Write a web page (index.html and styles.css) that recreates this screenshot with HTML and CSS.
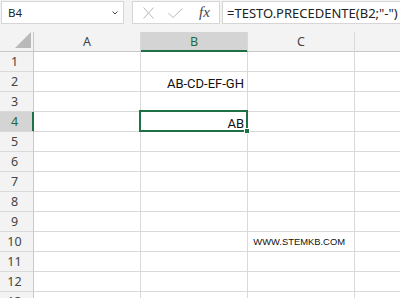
FILE: index.html
```html
<!DOCTYPE html>
<html lang="it">

<head>
  <meta charset="UTF-8">
  <meta name="viewport" content="width=device-width, initial-scale=1.0">
  <title>Foglio1</title>
  <link rel="stylesheet" href="styles.css">
</head>

<body>
  <div class="toolbar">
    <div class="name-box">
      <span>B4</span>
      <svg class="chevron" width="6" height="4" viewBox="0 0 6 4"><path d="M0.5 0.5 L3 3 L5.5 0.5" fill="none" stroke="#444" stroke-width="1"/></svg>
    </div>
    <div class="fx-buttons">
      <svg width="11" height="12" viewBox="0 0 11 12"><path d="M0.5 0.5 L10.5 11.5 M10.5 0.5 L0.5 11.5" stroke="#b8b8b8" stroke-width="1" fill="none"/></svg>
      <svg width="15" height="10" viewBox="0 0 15 10"><path d="M0.5 5 L5 9.5 L14.5 0.5" stroke="#b8b8b8" stroke-width="1" fill="none"/></svg>
      <span class="fx">fx</span>
    </div>
    <div class="formula">=TESTO.PRECEDENTE(B2;"-")</div>
  </div>

  <div class="sheet">
    <div class="hd corner"><svg width="16" height="16" viewBox="0 0 16 16"><path d="M16 0 L16 16 L0 16 Z" fill="#b9b9b9"/></svg></div>
    <div class="hd col">A</div>
    <div class="hd col active">B</div>
    <div class="hd col">C</div>
    <div class="hd col last"></div>

    <div class="hd row">1</div><div class="cell"></div><div class="cell"></div><div class="cell"></div><div class="cell last"></div>
    <div class="hd row">2</div><div class="cell"></div><div class="cell num">AB-CD-EF-GH</div><div class="cell"></div><div class="cell last"></div>
    <div class="hd row">3</div><div class="cell"></div><div class="cell"></div><div class="cell"></div><div class="cell last"></div>
    <div class="hd row active">4</div><div class="cell"></div><div class="cell num selected">AB</div><div class="cell"></div><div class="cell last"></div>
    <div class="hd row">5</div><div class="cell"></div><div class="cell"></div><div class="cell"></div><div class="cell last"></div>
    <div class="hd row">6</div><div class="cell"></div><div class="cell"></div><div class="cell"></div><div class="cell last"></div>
    <div class="hd row">7</div><div class="cell"></div><div class="cell"></div><div class="cell"></div><div class="cell last"></div>
    <div class="hd row">8</div><div class="cell"></div><div class="cell"></div><div class="cell"></div><div class="cell last"></div>
    <div class="hd row">9</div><div class="cell"></div><div class="cell"></div><div class="cell"></div><div class="cell last"></div>
    <div class="hd row">10</div><div class="cell"></div><div class="cell"></div><div class="cell note">WWW.STEMKB.COM</div><div class="cell last"></div>
    <div class="hd row">11</div><div class="cell"></div><div class="cell"></div><div class="cell"></div><div class="cell last"></div>
    <div class="hd row">12</div><div class="cell"></div><div class="cell"></div><div class="cell"></div><div class="cell last"></div>
    <div class="hd row">13</div><div class="cell"></div><div class="cell"></div><div class="cell"></div><div class="cell last"></div>
  </div>
</body>

</html>
```

FILE: styles.css
```css
html,
body {
  margin: 0;
  background: #fff;
  overflow: hidden;
}

body {
  width: 400px;
  height: 298px;
  font-family: "Noto Sans", sans-serif;
  color: #222;
}

.toolbar {
  display: flex;
  align-items: flex-start;
  height: 32px;
  padding: 1px 0 0 1px;
  box-sizing: border-box;
  background: #f3f3f3;
}

.name-box,
.fx-buttons,
.formula {
  height: 23px;
  box-sizing: border-box;
  background: #fff;
  border: 1px solid #d6d6d6;
  display: flex;
  align-items: center;
}

.name-box {
  width: 123px;
  padding: 0 5px 0 6px;
  justify-content: space-between;
  font-size: 11.5px;
}

.fx-buttons {
  width: 88px;
  margin-left: 8px;
  padding-left: 10px;
  gap: 14px;
}

.fx {
  font-family: "Liberation Serif", serif;
  font-style: italic;
  font-size: 15px;
  color: #444;
  margin-left: 2px;
}

.formula {
  flex: 1;
  margin-left: 2px;
  padding-left: 4px;
  border-right: none;
  font-size: 13px;
  white-space: nowrap;
  overflow: hidden;
}

.sheet {
  display: grid;
  grid-template-columns: 34px 107px 107px 107px 1fr;
  grid-auto-rows: 20px;
}

.sheet > div {
  box-sizing: border-box;
  border-right: 1px solid #d9d9d9;
  border-bottom: 1px solid #d9d9d9;
}

.hd {
  background: #f3f3f3;
  color: #444;
  font-size: 12.5px;
  display: flex;
  align-items: center;
  justify-content: center;
}

.sheet > .corner {
  justify-content: flex-end;
  align-items: flex-end;
  padding: 0 2px 3px 0;
  border-right-color: #c8c8c8;
  border-bottom-color: #c8c8c8;
}

.sheet > .col {
  border-bottom-color: #c8c8c8;
}

.sheet > .row {
  border-right-color: #c8c8c8;
  padding-right: 4px;
}

.sheet > .col.active {
  background: #d4d4d4;
  color: #1e6b40;
  border-bottom-color: #1e7145;
  box-shadow: inset 0 -1px 0 #1e7145;
}

.sheet > .row.active {
  background: #d4d4d4;
  color: #1e6b40;
  border-right-color: #1e7145;
  box-shadow: inset -1px 0 0 #1e7145;
}

.sheet > .last {
  border-right: none;
}

.num {
  font-family: Roboto, sans-serif;
  font-size: 13px;
  color: #111;
  text-align: right;
  line-height: 19px;
  padding: 2px 3px 0 0;
}

.selected {
  position: relative;
}

.selected::before {
  content: "";
  position: absolute;
  left: -2px;
  top: -2px;
  right: -1px;
  bottom: -1px;
  border: 2px solid #1e7145;
}

.selected::after {
  content: "";
  position: absolute;
  right: -3px;
  bottom: -3px;
  width: 6px;
  height: 6px;
  box-sizing: border-box;
  background: #1e7145;
  border: 1px solid #fff;
}

.note {
  font-family: "Liberation Sans", sans-serif;
  font-size: 9.4px;
  color: #111;
  display: flex;
  align-items: center;
  justify-content: flex-end;
  padding-right: 9px;
}
```
